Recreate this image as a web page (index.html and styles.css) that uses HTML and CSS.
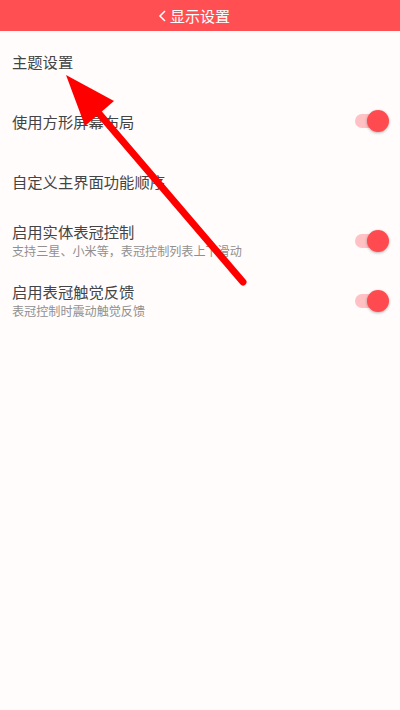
FILE: index.html
```html
<!DOCTYPE html>
<html lang="zh-CN">
<head>
    <meta charset="UTF-8">
    <meta name="viewport" content="width=device-width, initial-scale=1">
    <title>显示设置</title>
    <link rel="stylesheet" href="styles.css">
</head>
<body>
<div class="header">
    <span class="back">
        <svg width="9" height="12" viewBox="0 0 9 12"><path d="M7 1 L2 6 L7 11" fill="none" stroke="#fff" stroke-width="1.5"/></svg>
    </span>
    <span class="title">显示设置</span>
</div>
<div class="list">
    <div class="row">
        <div class="text"><div class="name">主题设置</div></div>
    </div>
    <div class="row">
        <div class="text"><div class="name">使用方形屏幕布局</div></div>
        <div class="switch"><div class="track"></div><div class="knob"></div></div>
    </div>
    <div class="row">
        <div class="text"><div class="name">自定义主界面功能顺序</div></div>
    </div>
    <div class="row">
        <div class="text">
            <div class="name">启用实体表冠控制</div>
            <div class="desc">支持三星、小米等，表冠控制列表上下滑动</div>
        </div>
        <div class="switch"><div class="track"></div><div class="knob"></div></div>
    </div>
    <div class="row">
        <div class="text">
            <div class="name">启用表冠触觉反馈</div>
            <div class="desc">表冠控制时震动触觉反馈</div>
        </div>
        <div class="switch"><div class="track"></div><div class="knob"></div></div>
    </div>
</div>
<svg class="arrow" width="400" height="710" viewBox="0 0 400 710">
    <line x1="243" y1="282" x2="96" y2="110" stroke="#ff0000" stroke-width="7" stroke-linecap="round"/>
    <polygon points="66,75 114,101 85,126" fill="#ff0000"/>
</svg>
</body>
</html>
```

FILE: styles.css
```css
body {
    margin: 0;
    background-color: #fffcfb;
    color: #444;
    font-family: "Noto Sans CJK SC", "Noto Sans", sans-serif;
    height: 710px;
    overflow: hidden;
}

.header {
    height: 31px;
    background-color: #ff4f52;
    color: #fff;
    display: flex;
    align-items: center;
    justify-content: center;
    font-size: 15px;
    padding-right: 12px;
}

.header .back {
    display: flex;
    margin-right: 3px;
    margin-top: 1px;
}

.row {
    height: 60px;
    display: flex;
    align-items: center;
    padding: 0 12px;
}

.text {
    flex: 1;
}

.name {
    font-size: 15.3px;
    line-height: 20px;
}

.desc {
    font-size: 12.1px;
    line-height: 20px;
    color: #909090;
}

.switch {
    position: relative;
    width: 36px;
    height: 24px;
    margin-right: -1px;
}

.track {
    position: absolute;
    left: 2px;
    top: 5px;
    width: 30px;
    height: 14px;
    border-radius: 7px;
    background-color: #ffc1c3;
}

.knob {
    position: absolute;
    right: 0;
    top: 1px;
    width: 22px;
    height: 22px;
    border-radius: 50%;
    background-color: #ff4a50;
    box-shadow: 0 1px 3px rgba(0, 0, 0, 0.3);
}

.arrow {
    position: absolute;
    left: 0;
    top: 0;
}
```
